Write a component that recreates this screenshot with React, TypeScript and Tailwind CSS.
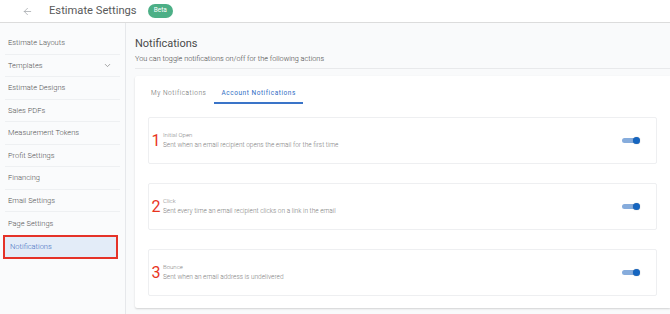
import { ArrowLeft, ChevronDown } from 'lucide-react'

const menu = [
  'Estimate Layouts',
  'Templates',
  'Estimate Designs',
  'Sales PDFs',
  'Measurement Tokens',
  'Profit Settings',
  'Financing',
  'Email Settings',
  'Page Settings',
  'Notifications',
]

const items = [
  { n: '1', title: 'Initial Open', desc: 'Sent when an email recipient opens the email for the first time' },
  { n: '2', title: 'Click', desc: 'Sent every time an email recipient clicks on a link in the email' },
  { n: '3', title: 'Bounce', desc: 'Sent when an email address is undelivered' },
]

function Toggle() {
  return (
    <div className="relative w-[18px] h-[8px] flex items-center">
      <div className="w-[14px] h-[5px] rounded-full bg-[#86acdc]" />
      <div className="absolute right-0 w-[7px] h-[7px] rounded-full bg-[#1565c0] shadow-[0_0_1px_rgba(0,0,0,0.4)]" />
    </div>
  )
}

export default function App() {
  return (
    <div className="w-[670px] h-[314px] overflow-hidden bg-white flex flex-col font-['Roboto',sans-serif] antialiased">
      {/* header */}
      <div className="h-[23px] flex items-center border-b border-[#dcdcdc] shadow-[0_1px_1px_rgba(0,0,0,0.08)] shrink-0">
        <ArrowLeft className="ml-[22px] w-[11px] h-[11px] text-[#a0a4a8]" strokeWidth={1.6} />
        <span className="ml-[16px] text-[11.2px] text-[#5a5a5a] leading-none">Estimate Settings</span>
        <span className="ml-[11px] h-[14px] px-[6px] rounded-full bg-[#4caf86] text-white text-[6.5px] flex items-center">Beta</span>
      </div>

      <div className="flex flex-1 min-h-0">
        {/* sidebar */}
        <div className="w-[126px] shrink-0 bg-[#fafbfc] border-r border-[#e6e8eb] pt-[9px] font-light">
          {menu.map((m, i) => {
            const active = m === 'Notifications'
            return (
              <div
                key={m}
                className={
                  active
                    ? 'ml-[3px] mr-[7px] h-[24px] flex items-center pl-[5px] bg-[#e3ecf8] border-2 border-[#e53228] text-[7.5px] text-[#3f6fc2]'
                    : 'mx-[5px] h-[22.5px] flex items-center pl-[3px] pr-[8px] text-[7.5px] text-[#555] ' +
                      (i < menu.length - 2 ? 'border-b border-[#eef0f2]' : '')
                }
              >
                <span className="flex-1">{m}</span>
                {m === 'Templates' && <ChevronDown className="w-[9px] h-[9px] text-[#888]" />}
              </div>
            )
          })}
        </div>

        {/* main */}
        <div className="flex-1 bg-[#f9fafb] pl-[9px] pt-[15px]">
          <div className="text-[11px] text-[#4a4a4a] leading-none">Notifications</div>
          <div className="mt-[6px] text-[7.3px] font-light text-[#444] leading-none">You can toggle notifications on/off for the following actions</div>
          <div className="mt-[6px] border-t border-[#e8e9eb]" />

          <div className="mt-[7px] bg-white shadow-[0_1px_2px_rgba(0,0,0,0.16)] px-[13px] pb-[12px] rounded-l-[2px]">
            <div className="flex h-[28px] items-end pl-[1px]">
              <div className="px-[2px] h-[15px] text-[6.5px] tracking-[0.55px] font-light text-[#666]">My Notifications</div>
              <div className="ml-[6px] px-[7px] h-[15px] text-[6.5px] tracking-[0.55px] text-[#2f6cc4] border-b-2 border-[#3a74c8]">Account Notifications</div>
            </div>

            <div className="mt-[13px] flex flex-col gap-[19px]">
              {items.map(it => (
                <div key={it.n} className="h-[47px] border border-[#eeeff1] rounded-[2px] flex items-center pl-[1px] pr-[16px]">
                  <span className="w-[12px] text-center text-[16px] text-[#e8341e] leading-none">{it.n}</span>
                  <div className="flex-1 ml-[1px] -mt-[2px] font-light">
                    <div className="text-[6px] text-[#888] leading-none">{it.title}</div>
                    <div className="mt-[4px] text-[6.5px] text-[#808080] leading-none">{it.desc}</div>
                  </div>
                  <Toggle />
                </div>
              ))}
            </div>
          </div>
        </div>
      </div>
    </div>
  )
}
